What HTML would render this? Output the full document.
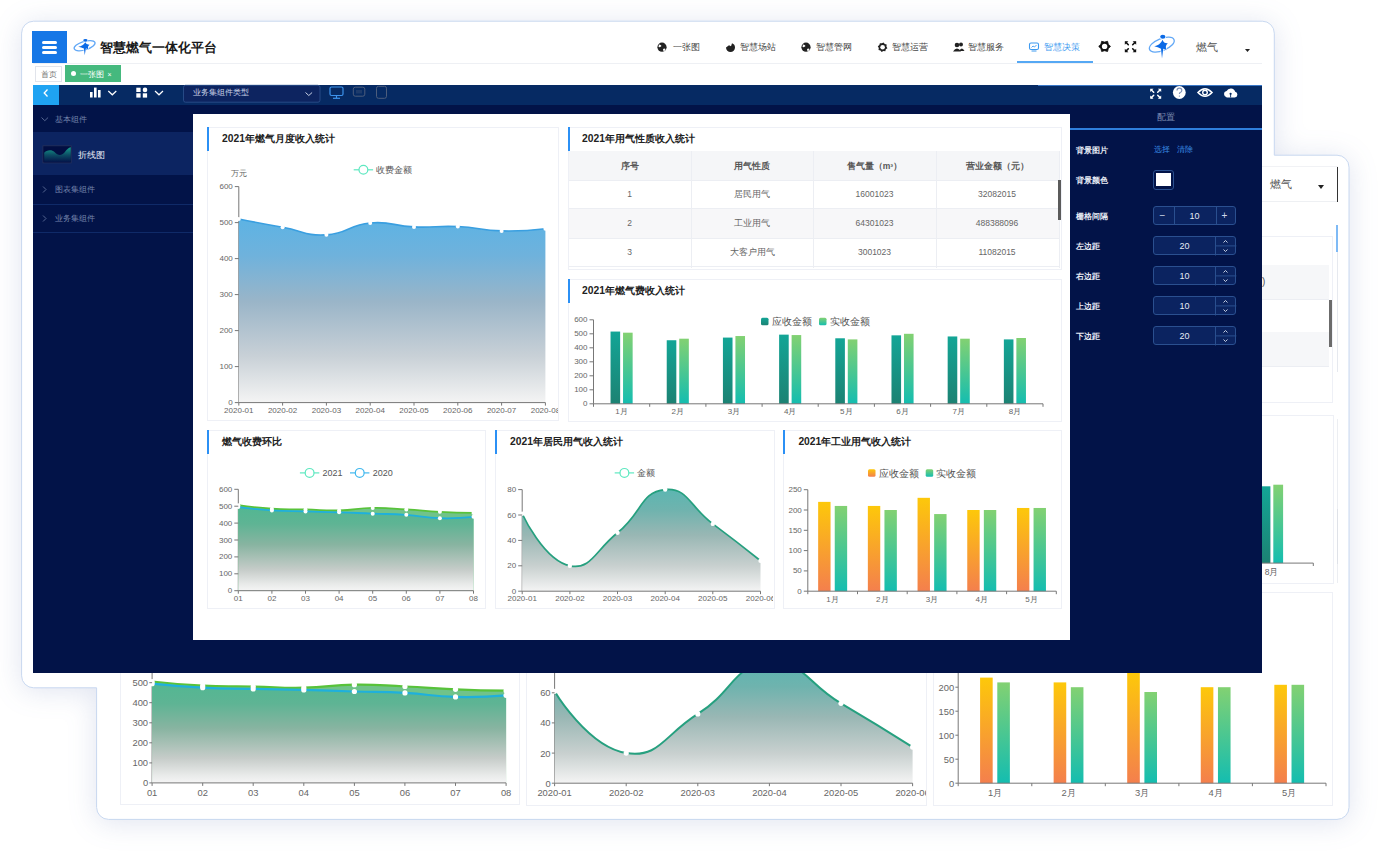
<!DOCTYPE html>
<html><head><meta charset="utf-8">
<style>
*{box-sizing:border-box;margin:0;padding:0}
html,body{width:1384px;height:867px;overflow:hidden;background:#fff;font-family:"Liberation Sans",sans-serif}
.a{position:absolute}
.win{position:absolute;background:#fff;border:1px solid #cddcf2;border-radius:12px;box-shadow:0 2px 34px rgba(50,80,150,0.17)}
svg.ov{position:absolute;left:0;top:0;width:1384px;height:867px;font-family:"Liberation Sans",sans-serif}
.card{position:absolute;border:1px solid #eef0f6;background:#fff}
.acc{position:absolute;width:2px;background:#2b90f5}
.ttl{position:absolute;font-size:10.3px;font-weight:bold;color:#222;line-height:12px;white-space:nowrap}
.nav{position:absolute;font-size:9px;font-weight:500;color:#444;line-height:10px;white-space:nowrap}
.lbl{position:absolute;font-size:8px;color:#e8ecf5;font-weight:bold;line-height:10px;white-space:nowrap}
.inp{position:absolute;border:1px solid #2a4f8f;background:#0b2360;border-radius:3px;color:#dfe6f3;font-size:8px}
.sb{position:absolute;left:33px;width:160px;border-bottom:1px solid #0f2a68}
.sbt{position:absolute;font-size:8px;color:#7483ab;line-height:10px;white-space:nowrap}
.td{position:absolute;font-size:8px;color:#666;line-height:10px;white-space:nowrap;text-align:center}
</style></head><body>

<!-- ============ FRAME ============ -->
<svg class="ov" viewBox="0 0 1384 867" style="filter:drop-shadow(0 3px 14px rgba(60,90,160,0.16))">
<path d="M33.6,21.2 H1262.3 A12,12 0 0 1 1274.3,33.2 V155.2 H1337.0 A12,12 0 0 1 1349.0,167.2 V807.4 A12,12 0 0 1 1337.0,819.4 H108.6 A12,12 0 0 1 96.6,807.4 V687.8 H33.6 A12,12 0 0 1 21.6,675.8 V33.2 A12,12 0 0 1 33.6,21.2 Z" fill="#fff" stroke="#c8d8f0" stroke-width="1"/>
</svg>
<!-- ============ BACK WINDOW ============ -->
<!-- back header -->
<div class="a" style="left:1262px;top:166px;width:76px;height:1px;background:#f1f2f5"></div>
<div class="a" style="left:1262px;top:201px;width:76px;height:1px;background:#eef0f3"></div>
<div class="a" style="left:1270px;top:178px;font-size:11px;color:#555;line-height:12px">燃气</div>
<div class="a" style="left:1318px;top:185px;width:0;height:0;border-left:3px solid transparent;border-right:3px solid transparent;border-top:4px solid #222"></div>
<div class="a" style="left:1336.5px;top:167px;width:1.5px;height:35px;background:#333"></div>
<div class="a" style="left:1336px;top:225px;width:1.5px;height:27px;background:#7fbaf5"></div>
<div class="a" style="left:1337px;top:252px;width:1px;height:120px;background:#e6e9ef"></div>
<!-- back right strip cards -->
<div class="card" style="left:1240px;top:236px;width:93px;height:167px"></div>
<div class="a" style="left:1240px;top:265px;width:89px;height:34px;background:#f6f7f9"></div>
<div class="a" style="left:1240px;top:332px;width:89px;height:34px;background:#f6f7f9"></div>
<div class="a" style="left:1240px;top:299px;width:89px;height:1px;background:#eceef3"></div>
<div class="a" style="left:1240px;top:366px;width:89px;height:1px;background:#eceef3"></div>
<div class="a" style="left:1329px;top:300px;width:3px;height:47px;background:#6b6b6b"></div>
<div class="a" style="left:1262px;top:276px;font-size:10px;color:#555;line-height:11px">)</div>
<div class="card" style="left:1240px;top:415px;width:94px;height:169px"></div>
<div class="a" style="left:1336.5px;top:419px;width:1px;height:164px;background:#eceef2"></div>
<div class="a" style="left:1336.5px;top:509px;width:1px;height:55px;background:#dfe2e8"></div>
<!-- back bottom cards -->
<div class="card" style="left:120px;top:592px;width:400px;height:213px"></div>
<div class="card" style="left:526px;top:592px;width:401px;height:214px"></div>
<div class="card" style="left:933px;top:592px;width:400px;height:214px"></div>
<svg class="ov" viewBox="0 0 1384 867">
<line x1="152.1" y1="662.7" x2="152.1" y2="782.9" stroke="#777" stroke-width="1"/>
<defs><linearGradient id="g13" x1="0" y1="681.5" x2="0" y2="782.9" gradientUnits="userSpaceOnUse"><stop offset="0" stop-color="#70c38a"/><stop offset="1" stop-color="#70c38a"/></linearGradient></defs>
<path d="M152.10,681.50 C152.10,681.50 177.34,684.45 202.67,685.71 C227.91,686.96 227.96,686.01 253.24,686.51 C278.53,687.01 278.54,688.16 303.81,687.71 C329.11,687.26 329.08,685.00 354.38,684.70 C379.65,684.40 379.68,685.36 404.95,686.51 C430.25,687.66 430.22,688.26 455.52,689.31 C480.79,690.36 506.09,690.72 506.09,690.72 L506.09,782.90 L152.10,782.90 Z" fill="url(#g13)"/>
<path d="M152.10,681.50 C152.10,681.50 177.34,684.45 202.67,685.71 C227.91,686.96 227.96,686.01 253.24,686.51 C278.53,687.01 278.54,688.16 303.81,687.71 C329.11,687.26 329.08,685.00 354.38,684.70 C379.65,684.40 379.68,685.36 404.95,686.51 C430.25,687.66 430.22,688.26 455.52,689.31 C480.79,690.36 506.09,690.72 506.09,690.72" fill="none" stroke="#58c23a" stroke-width="2.2"/>
<defs><linearGradient id="g14" x1="0" y1="683.7" x2="0" y2="782.9" gradientUnits="userSpaceOnUse"><stop offset="0" stop-color="#52b792"/><stop offset="0.2" stop-color="#5eb494"/><stop offset="0.45" stop-color="#88b4a1"/><stop offset="0.75" stop-color="#c6ccc9"/><stop offset="0.92" stop-color="#e8eae9"/><stop offset="1" stop-color="#f5f5f5"/></linearGradient></defs>
<path d="M152.10,683.70 C152.10,683.70 177.35,686.41 202.67,687.71 C227.92,689.01 227.95,688.36 253.24,688.91 C278.52,689.46 278.53,689.26 303.81,689.91 C329.10,690.57 329.09,690.77 354.38,691.52 C379.66,692.27 379.70,691.57 404.95,692.92 C430.27,694.27 430.20,696.33 455.52,696.93 C480.77,697.53 506.09,695.33 506.09,695.33 L506.09,782.90 L152.10,782.90 Z" fill="url(#g14)"/>
<path d="M152.10,683.70 C152.10,683.70 177.35,686.41 202.67,687.71 C227.92,689.01 227.95,688.36 253.24,688.91 C278.52,689.46 278.53,689.26 303.81,689.91 C329.10,690.57 329.09,690.77 354.38,691.52 C379.66,692.27 379.70,691.57 404.95,692.92 C430.27,694.27 430.20,696.33 455.52,696.93 C480.77,697.53 506.09,695.33 506.09,695.33" fill="none" stroke="#1fb0dc" stroke-width="2.2"/>
<circle cx="152.10" cy="681.50" r="2.6" fill="#fff"/><circle cx="152.10" cy="683.70" r="2.6" fill="#fff"/>
<circle cx="202.67" cy="685.71" r="2.6" fill="#fff"/><circle cx="202.67" cy="687.71" r="2.6" fill="#fff"/>
<circle cx="253.24" cy="686.51" r="2.6" fill="#fff"/><circle cx="253.24" cy="688.91" r="2.6" fill="#fff"/>
<circle cx="303.81" cy="687.71" r="2.6" fill="#fff"/><circle cx="303.81" cy="689.91" r="2.6" fill="#fff"/>
<circle cx="354.38" cy="684.70" r="2.6" fill="#fff"/><circle cx="354.38" cy="691.52" r="2.6" fill="#fff"/>
<circle cx="404.95" cy="686.51" r="2.6" fill="#fff"/><circle cx="404.95" cy="692.92" r="2.6" fill="#fff"/>
<circle cx="455.52" cy="689.31" r="2.6" fill="#fff"/><circle cx="455.52" cy="696.93" r="2.6" fill="#fff"/>
<circle cx="506.09" cy="690.72" r="2.6" fill="#fff"/><circle cx="506.09" cy="695.33" r="2.6" fill="#fff"/>
<line x1="149.3" y1="782.9" x2="152.1" y2="782.9" stroke="#777" stroke-width="1"/>
<text x="148.1" y="782.9" font-size="9.4" fill="#666" text-anchor="end" dominant-baseline="central">0</text>
<line x1="149.3" y1="762.9" x2="152.1" y2="762.9" stroke="#777" stroke-width="1"/>
<text x="148.1" y="762.9" font-size="9.4" fill="#666" text-anchor="end" dominant-baseline="central">100</text>
<line x1="149.3" y1="742.8" x2="152.1" y2="742.8" stroke="#777" stroke-width="1"/>
<text x="148.1" y="742.8" font-size="9.4" fill="#666" text-anchor="end" dominant-baseline="central">200</text>
<line x1="149.3" y1="722.8" x2="152.1" y2="722.8" stroke="#777" stroke-width="1"/>
<text x="148.1" y="722.8" font-size="9.4" fill="#666" text-anchor="end" dominant-baseline="central">300</text>
<line x1="149.3" y1="702.7" x2="152.1" y2="702.7" stroke="#777" stroke-width="1"/>
<text x="148.1" y="702.7" font-size="9.4" fill="#666" text-anchor="end" dominant-baseline="central">400</text>
<line x1="149.3" y1="682.7" x2="152.1" y2="682.7" stroke="#777" stroke-width="1"/>
<text x="148.1" y="682.7" font-size="9.4" fill="#666" text-anchor="end" dominant-baseline="central">500</text>
<line x1="149.3" y1="662.7" x2="152.1" y2="662.7" stroke="#777" stroke-width="1"/>
<text x="148.1" y="662.7" font-size="9.4" fill="#666" text-anchor="end" dominant-baseline="central">600</text>
<line x1="152.1" y1="782.9" x2="506.0" y2="782.9" stroke="#777" stroke-width="1"/>
<text x="152.1" y="792.6" font-size="9.4" fill="#666" text-anchor="middle" dominant-baseline="central">01</text>
<text x="202.7" y="792.6" font-size="9.4" fill="#666" text-anchor="middle" dominant-baseline="central">02</text>
<text x="253.2" y="792.6" font-size="9.4" fill="#666" text-anchor="middle" dominant-baseline="central">03</text>
<text x="303.8" y="792.6" font-size="9.4" fill="#666" text-anchor="middle" dominant-baseline="central">04</text>
<text x="354.4" y="792.6" font-size="9.4" fill="#666" text-anchor="middle" dominant-baseline="central">05</text>
<text x="404.9" y="792.6" font-size="9.4" fill="#666" text-anchor="middle" dominant-baseline="central">06</text>
<text x="455.5" y="792.6" font-size="9.4" fill="#666" text-anchor="middle" dominant-baseline="central">07</text>
<text x="506.1" y="792.6" font-size="9.4" fill="#666" text-anchor="middle" dominant-baseline="central">08</text>
<line x1="152.1" y1="782.9" x2="152.1" y2="785.9" stroke="#777" stroke-width="1"/>
<line x1="202.7" y1="782.9" x2="202.7" y2="785.9" stroke="#777" stroke-width="1"/>
<line x1="253.2" y1="782.9" x2="253.2" y2="785.9" stroke="#777" stroke-width="1"/>
<line x1="303.8" y1="782.9" x2="303.8" y2="785.9" stroke="#777" stroke-width="1"/>
<line x1="354.4" y1="782.9" x2="354.4" y2="785.9" stroke="#777" stroke-width="1"/>
<line x1="404.9" y1="782.9" x2="404.9" y2="785.9" stroke="#777" stroke-width="1"/>
<line x1="455.5" y1="782.9" x2="455.5" y2="785.9" stroke="#777" stroke-width="1"/>
<line x1="506.1" y1="782.9" x2="506.1" y2="785.9" stroke="#777" stroke-width="1"/>
<line x1="554.6" y1="662.7" x2="554.6" y2="783.2" stroke="#777" stroke-width="1"/>
<defs><linearGradient id="g15" x1="0" y1="662.7" x2="0" y2="783.2" gradientUnits="userSpaceOnUse"><stop offset="0" stop-color="#5cb6b1"/><stop offset="0.2" stop-color="#6fb3ae"/><stop offset="0.45" stop-color="#99b7b4"/><stop offset="0.75" stop-color="#c8d0cf"/><stop offset="1" stop-color="#f4f4f4"/></linearGradient></defs>
<path d="M554.60,691.30 C554.60,691.30 587.77,747.01 626.20,753.07 C659.37,758.30 663.36,735.64 697.80,713.90 C734.96,690.45 732.40,665.40 769.40,662.68 C804.00,660.13 805.53,682.46 841.00,703.36 C877.13,724.64 912.60,747.04 912.60,747.04 L912.60,783.20 L554.60,783.20 Z" fill="url(#g15)"/>
<path d="M554.60,691.30 C554.60,691.30 587.77,747.01 626.20,753.07 C659.37,758.30 663.36,735.64 697.80,713.90 C734.96,690.45 732.40,665.40 769.40,662.68 C804.00,660.13 805.53,682.46 841.00,703.36 C877.13,724.64 912.60,747.04 912.60,747.04" fill="none" stroke="#26a07f" stroke-width="2.0"/>
<circle cx="554.60" cy="691.30" r="2.6" fill="#fff"/>
<circle cx="626.20" cy="753.07" r="2.6" fill="#fff"/>
<circle cx="697.80" cy="713.90" r="2.6" fill="#fff"/>
<circle cx="769.40" cy="662.68" r="2.6" fill="#fff"/>
<circle cx="841.00" cy="703.36" r="2.6" fill="#fff"/>
<circle cx="912.60" cy="747.04" r="2.6" fill="#fff"/>
<line x1="551.8" y1="783.2" x2="554.6" y2="783.2" stroke="#777" stroke-width="1"/>
<text x="550.6" y="783.2" font-size="9.4" fill="#666" text-anchor="end" dominant-baseline="central">0</text>
<line x1="551.8" y1="753.1" x2="554.6" y2="753.1" stroke="#777" stroke-width="1"/>
<text x="550.6" y="753.1" font-size="9.4" fill="#666" text-anchor="end" dominant-baseline="central">20</text>
<line x1="551.8" y1="722.9" x2="554.6" y2="722.9" stroke="#777" stroke-width="1"/>
<text x="550.6" y="722.9" font-size="9.4" fill="#666" text-anchor="end" dominant-baseline="central">40</text>
<line x1="551.8" y1="692.8" x2="554.6" y2="692.8" stroke="#777" stroke-width="1"/>
<text x="550.6" y="692.8" font-size="9.4" fill="#666" text-anchor="end" dominant-baseline="central">60</text>
<line x1="551.8" y1="662.7" x2="554.6" y2="662.7" stroke="#777" stroke-width="1"/>
<text x="550.6" y="662.7" font-size="9.4" fill="#666" text-anchor="end" dominant-baseline="central">80</text>
<line x1="554.6" y1="783.2" x2="912.6" y2="783.2" stroke="#777" stroke-width="1"/>
<clipPath id="c6"><rect x="527" y="592" width="399" height="213"/></clipPath><g clip-path="url(#c6)">
<text x="554.6" y="792.3" font-size="9.4" fill="#666" text-anchor="middle" dominant-baseline="central">2020-01</text>
<text x="626.2" y="792.3" font-size="9.4" fill="#666" text-anchor="middle" dominant-baseline="central">2020-02</text>
<text x="697.8" y="792.3" font-size="9.4" fill="#666" text-anchor="middle" dominant-baseline="central">2020-03</text>
<text x="769.4" y="792.3" font-size="9.4" fill="#666" text-anchor="middle" dominant-baseline="central">2020-04</text>
<text x="841.0" y="792.3" font-size="9.4" fill="#666" text-anchor="middle" dominant-baseline="central">2020-05</text>
<text x="912.6" y="792.3" font-size="9.4" fill="#666" text-anchor="middle" dominant-baseline="central">2020-06</text>
<line x1="554.6" y1="783.2" x2="554.6" y2="786.2" stroke="#777" stroke-width="1"/>
<line x1="626.2" y1="783.2" x2="626.2" y2="786.2" stroke="#777" stroke-width="1"/>
<line x1="697.8" y1="783.2" x2="697.8" y2="786.2" stroke="#777" stroke-width="1"/>
<line x1="769.4" y1="783.2" x2="769.4" y2="786.2" stroke="#777" stroke-width="1"/>
<line x1="841.0" y1="783.2" x2="841.0" y2="786.2" stroke="#777" stroke-width="1"/>
<line x1="912.6" y1="783.2" x2="912.6" y2="786.2" stroke="#777" stroke-width="1"/>
</g>
<line x1="958.2" y1="663.2" x2="958.2" y2="783.2" stroke="#777" stroke-width="1"/>
<defs><linearGradient id="b16" x1="0" y1="0" x2="0" y2="1"><stop offset="0" stop-color="#fdc80a"/><stop offset="1" stop-color="#f47f4d"/></linearGradient></defs>
<defs><linearGradient id="b17" x1="0" y1="0" x2="0" y2="1"><stop offset="0" stop-color="#82d172"/><stop offset="1" stop-color="#14bdb0"/></linearGradient></defs>
<rect x="980.08" y="677.60" width="12.60" height="105.60" fill="url(#b16)"/>
<rect x="997.28" y="682.40" width="12.60" height="100.80" fill="url(#b17)"/>
<rect x="1053.64" y="682.40" width="12.60" height="100.80" fill="url(#b16)"/>
<rect x="1070.84" y="687.20" width="12.60" height="96.00" fill="url(#b17)"/>
<rect x="1127.20" y="672.80" width="12.60" height="110.40" fill="url(#b16)"/>
<rect x="1144.40" y="692.00" width="12.60" height="91.20" fill="url(#b17)"/>
<rect x="1200.76" y="687.20" width="12.60" height="96.00" fill="url(#b16)"/>
<rect x="1217.96" y="687.20" width="12.60" height="96.00" fill="url(#b17)"/>
<rect x="1274.32" y="684.80" width="12.60" height="98.40" fill="url(#b16)"/>
<rect x="1291.52" y="684.80" width="12.60" height="98.40" fill="url(#b17)"/>
<line x1="955.4" y1="783.2" x2="958.2" y2="783.2" stroke="#777" stroke-width="1"/>
<text x="954.2" y="783.2" font-size="9.4" fill="#666" text-anchor="end" dominant-baseline="central">0</text>
<line x1="955.4" y1="759.2" x2="958.2" y2="759.2" stroke="#777" stroke-width="1"/>
<text x="954.2" y="759.2" font-size="9.4" fill="#666" text-anchor="end" dominant-baseline="central">50</text>
<line x1="955.4" y1="735.2" x2="958.2" y2="735.2" stroke="#777" stroke-width="1"/>
<text x="954.2" y="735.2" font-size="9.4" fill="#666" text-anchor="end" dominant-baseline="central">100</text>
<line x1="955.4" y1="711.2" x2="958.2" y2="711.2" stroke="#777" stroke-width="1"/>
<text x="954.2" y="711.2" font-size="9.4" fill="#666" text-anchor="end" dominant-baseline="central">150</text>
<line x1="955.4" y1="687.2" x2="958.2" y2="687.2" stroke="#777" stroke-width="1"/>
<text x="954.2" y="687.2" font-size="9.4" fill="#666" text-anchor="end" dominant-baseline="central">200</text>
<line x1="955.4" y1="663.2" x2="958.2" y2="663.2" stroke="#777" stroke-width="1"/>
<text x="954.2" y="663.2" font-size="9.4" fill="#666" text-anchor="end" dominant-baseline="central">250</text>
<line x1="958.2" y1="783.2" x2="1326.0" y2="783.2" stroke="#777" stroke-width="1"/>
<text x="995.0" y="792.3" font-size="9.4" fill="#666" text-anchor="middle" dominant-baseline="central">1月</text>
<text x="1068.5" y="792.3" font-size="9.4" fill="#666" text-anchor="middle" dominant-baseline="central">2月</text>
<text x="1142.1" y="792.3" font-size="9.4" fill="#666" text-anchor="middle" dominant-baseline="central">3月</text>
<text x="1215.7" y="792.3" font-size="9.4" fill="#666" text-anchor="middle" dominant-baseline="central">4月</text>
<text x="1289.2" y="792.3" font-size="9.4" fill="#666" text-anchor="middle" dominant-baseline="central">5月</text>
<line x1="958.2" y1="783.2" x2="958.2" y2="786.2" stroke="#777" stroke-width="1"/>
<line x1="1031.8" y1="783.2" x2="1031.8" y2="786.2" stroke="#777" stroke-width="1"/>
<line x1="1105.3" y1="783.2" x2="1105.3" y2="786.2" stroke="#777" stroke-width="1"/>
<line x1="1178.9" y1="783.2" x2="1178.9" y2="786.2" stroke="#777" stroke-width="1"/>
<line x1="1252.4" y1="783.2" x2="1252.4" y2="786.2" stroke="#777" stroke-width="1"/>
<line x1="1326.0" y1="783.2" x2="1326.0" y2="786.2" stroke="#777" stroke-width="1"/>
<defs><linearGradient id="rb1" x1="0" y1="0" x2="0" y2="1"><stop offset="0" stop-color="#13a596"/><stop offset="1" stop-color="#1c8273"/></linearGradient><linearGradient id="rb2" x1="0" y1="0" x2="0" y2="1"><stop offset="0" stop-color="#82d172"/><stop offset="1" stop-color="#14bdb0"/></linearGradient></defs>
<rect x="1261.6" y="486.3" width="8.8" height="76.8" fill="url(#rb1)"/>
<rect x="1273.3" y="484.7" width="9.8" height="78.4" fill="url(#rb2)"/>
<line x1="1240" y1="563.1" x2="1313.3" y2="563.1" stroke="#777"/><line x1="1313.3" y1="563.1" x2="1313.3" y2="566" stroke="#777"/>
<text x="1271.5" y="572" font-size="8.5" fill="#666" text-anchor="middle" dominant-baseline="central">8月</text>
</svg>

<!-- ============ FRONT WINDOW ============ -->
<!-- header -->
<div class="a" style="left:32px;top:31px;width:34.5px;height:31.5px;background:#1677e6"></div>
<div class="a" style="left:41.5px;top:41px;width:15.5px;height:2.6px;background:#fff;border-radius:2px"></div>
<div class="a" style="left:41.5px;top:46.4px;width:15.5px;height:2.6px;background:#fff;border-radius:2px"></div>
<div class="a" style="left:41.5px;top:51.3px;width:15.5px;height:2.6px;background:#fff;border-radius:2px"></div>
<div class="a" style="left:33px;top:63px;width:1229px;height:1px;background:#eef0f4"></div>
<!-- logo -->
<svg class="ov" viewBox="0 0 1384 867">
<defs>
<g id="logo">
 <ellipse cx="13.8" cy="10.6" rx="13.2" ry="6.0" transform="rotate(-22 13.8 10.6)" fill="none" stroke="#62a8f6" stroke-width="1.3" vector-effect="non-scaling-stroke"/>
 <path d="M14.6,5.8 Q15.6,9.6 19.8,9.3 Q16.6,12 18.6,16.2 Q15.6,14 15.2,15 L14,24.5 L13,14.8 Q10,13 6.2,12.3 Q12,11.5 14.6,5.8 Z" fill="#0b6ae6" stroke="#fff" stroke-width="1.2" paint-order="stroke"/>
 <ellipse cx="14.8" cy="2.8" rx="2.6" ry="2" fill="#0b6ae6" stroke="#fff" stroke-width="1.2" paint-order="stroke"/>
</g>
</defs>
<use href="#logo" transform="translate(73,38.35) scale(0.84,0.69)"/>
<use href="#logo" transform="translate(1148,34)"/>
</svg>
<div class="a" style="left:100px;top:40.5px;font-size:12.8px;font-weight:bold;color:#1a1a1a;line-height:14px;white-space:nowrap">智慧燃气一体化平台</div>
<!-- nav -->
<div class="nav" style="left:672.8px;top:42px">一张图</div>
<div class="nav" style="left:739.6px;top:42px">智慧场站</div>
<div class="nav" style="left:815.8px;top:42px">智慧管网</div>
<div class="nav" style="left:892px;top:42px">智慧运营</div>
<div class="nav" style="left:968.2px;top:42px">智慧服务</div>
<div class="nav" style="left:1044.4px;top:42px;color:#3d9af0">智慧决策</div>
<div class="a" style="left:1017px;top:61px;width:76px;height:2px;background:#55a8f4"></div>
<svg class="ov" viewBox="0 0 1384 867">
 <!-- globe icons -->
 <g fill="#222">
  <circle cx="662" cy="47.2" r="4.6"/>
  <circle cx="806" cy="47.2" r="4.6"/>
 </g>
 <g fill="#fff"><path d="M659,44.5 q2,0 2.5,1.5 q-1,1.5 -3,1 z M663,49 q1.5,-1 2.5,0 q-0.5,2 -2,2.5 z"/><path d="M803,44.5 q2,0 2.5,1.5 q-1,1.5 -3,1 z M807,49 q1.5,-1 2.5,0 q-0.5,2 -2,2.5 z"/></g>
 <!-- 场站 icon -->
 <path d="M726,47.5 a4.5,4.5 0 1 0 9,0 a4.5,4.5 0 0 0 -3,-4.2 l-1,3 l-2,-1 z" fill="#222"/>
 <!-- gear small -->
 <path d="M887.41,48.16 L885.84,49.37 L885.32,51.27 L883.36,51.03 L881.64,52.01 L880.43,50.44 L878.53,49.92 L878.77,47.96 L877.79,46.24 L879.36,45.03 L879.88,43.13 L881.84,43.37 L883.56,42.39 L884.77,43.96 L886.67,44.48 L886.43,46.44 Z" fill="#222"/><circle cx="882.6" cy="47.2" r="2.3" fill="#fff"/>
 <!-- users -->
 <g fill="#222"><circle cx="957" cy="45" r="2.3"/><path d="M953,51.5 q4,-6 8,0 z"/><circle cx="961" cy="44.5" r="2"/><path d="M959,51 q3,-5 5.5,0 z"/></g>
 <!-- decision icon -->
 <rect x="1029.5" y="43" width="9" height="6.5" rx="1.5" fill="none" stroke="#3d9af0" stroke-width="1.1"/>
 <path d="M1031.5,47.5 l1.5,-1.5 l1.5,1 l2,-2" fill="none" stroke="#3d9af0" stroke-width="0.9"/>
 <line x1="1031.5" y1="51" x2="1036.5" y2="51" stroke="#3d9af0" stroke-width="1"/>
 <!-- gear big -->
 <path d="M1110.50,46.40 L1108.32,48.55 L1107.55,51.51 L1104.60,50.70 L1101.65,51.51 L1100.88,48.55 L1098.70,46.40 L1100.88,44.25 L1101.65,41.29 L1104.60,42.10 L1107.55,41.29 L1108.32,44.25 Z" fill="#111" stroke="#111" stroke-width="0.8" stroke-linejoin="round"/>
 <circle cx="1104.6" cy="46.4" r="2.7" fill="#fff"/>
<!-- expand -->
<path d="M1124.80,41.20 h3.60 L1124.80,44.80 Z" fill="#111"/>
<line x1="1126.00" y1="42.40" x2="1128.30" y2="44.70" stroke="#111" stroke-width="1.6" stroke-linecap="round"/>
<path d="M1136.20,41.20 h-3.60 L1136.20,44.80 Z" fill="#111"/>
<line x1="1135.00" y1="42.40" x2="1132.70" y2="44.70" stroke="#111" stroke-width="1.6" stroke-linecap="round"/>
<path d="M1124.80,52.30 h3.60 L1124.80,48.70 Z" fill="#111"/>
<line x1="1126.00" y1="51.10" x2="1128.30" y2="48.80" stroke="#111" stroke-width="1.6" stroke-linecap="round"/>
<path d="M1136.20,52.30 h-3.60 L1136.20,48.70 Z" fill="#111"/>
<line x1="1135.00" y1="51.10" x2="1132.70" y2="48.80" stroke="#111" stroke-width="1.6" stroke-linecap="round"/>
 
 <path d="M1245,49 h5 l-2.5,3 z" fill="#222"/>
</svg>
<div class="a" style="left:1196px;top:41px;font-size:10.5px;color:#555;line-height:12px">燃气</div>

<!-- tabs -->
<div class="a" style="left:35px;top:65.5px;width:27px;height:16px;border:1px solid #e1e4eb;background:#fff;font-size:7.5px;color:#777;line-height:15px;text-align:center">首页</div>
<div class="a" style="left:65.3px;top:65.4px;width:55.7px;height:16.3px;background:#45b97e"></div>
<div class="a" style="left:71.2px;top:71.3px;width:5.2px;height:5.2px;border-radius:50%;background:#fff"></div>
<div class="a" style="left:79.5px;top:70px;font-size:8px;color:#fff;line-height:10px;white-space:nowrap">一张图</div>
<div class="a" style="left:107.5px;top:70px;font-size:7px;color:#fff;line-height:10px">×</div>

<!-- dark editor area -->
<div class="a" style="left:33px;top:85px;width:1229.2px;height:20px;background:#062a63"></div>
<div class="a" style="left:1038px;top:84.5px;width:224.2px;height:1px;background:#3a78c8"></div>
<div class="a" style="left:33px;top:105px;width:1229.2px;height:568px;background:#021348"></div>
<div class="a" style="left:33px;top:85px;width:25.6px;height:20px;background:#1fa3f2"></div>
<svg class="ov" viewBox="0 0 1384 867">
 <path d="M47.5,89.5 l-3.3,3.5 l3.3,3.5" fill="none" stroke="#fff" stroke-width="1.3"/>
 <!-- bars icon -->
 <g fill="#fff"><rect x="90" y="92" width="2.6" height="5.5"/><rect x="94" y="87.6" width="2.6" height="9.9"/><rect x="98" y="90" width="2.6" height="7.5"/></g>
 <path d="M108.3,91 l4,3.8 l4,-3.8" fill="none" stroke="#fff" stroke-width="1.2"/>
 <!-- grid icon -->
 <g fill="#fff"><rect x="136.3" y="87.7" width="4.3" height="4.3"/><circle cx="145" cy="89.9" r="2.3"/><rect x="136.3" y="93.3" width="4.3" height="4.3"/><rect x="142.8" y="93.3" width="4.3" height="4.3"/></g>
 <path d="M155,91 l4,3.8 l4,-3.8" fill="none" stroke="#fff" stroke-width="1.2"/>
 <!-- select -->
 <rect x="183.5" y="85.3" width="136.5" height="16.9" rx="2" fill="#0d2460" stroke="#2a4e8a" stroke-width="0.9"/>
 <text x="193" y="92.3" font-size="8.4px" fill="#c9d2e6" dominant-baseline="central">业务集组件类型</text>
 <path d="M305.5,92.5 l3.3,3 l3.3,-3" fill="none" stroke="#c9d2e6" stroke-width="1"/>
 <!-- device icons -->
 <rect x="330" y="87" width="13" height="8.5" rx="1.5" fill="none" stroke="#3d93ec" stroke-width="1.2"/>
 <line x1="336.5" y1="95.5" x2="336.5" y2="98" stroke="#3d93ec" stroke-width="1.2"/><line x1="333" y1="98.3" x2="340" y2="98.3" stroke="#3d93ec" stroke-width="1.2"/>
 <rect x="353.3" y="87.2" width="11.5" height="9" rx="2" fill="none" stroke="#4d5d7c" stroke-width="1"/>
 <path d="M357,90 v3.5 M359,90 v3.5 M361,90 v3.5" stroke="#4d5d7c" stroke-width="0.7"/>
 <rect x="376.5" y="86.3" width="10" height="12" rx="2" fill="none" stroke="#4d5d7c" stroke-width="1"/>
 <!-- right toolbar icons -->
 <path d="M1150.20,88.80 h3.30 L1150.20,92.10 Z" fill="#fff"/>
<line x1="1151.40" y1="90.00" x2="1153.70" y2="92.30" stroke="#fff" stroke-width="1.5" stroke-linecap="round"/>
<path d="M1161.20,88.80 h-3.30 L1161.20,92.10 Z" fill="#fff"/>
<line x1="1160.00" y1="90.00" x2="1157.70" y2="92.30" stroke="#fff" stroke-width="1.5" stroke-linecap="round"/>
<path d="M1150.20,98.80 h3.30 L1150.20,95.50 Z" fill="#fff"/>
<line x1="1151.40" y1="97.60" x2="1153.70" y2="95.30" stroke="#fff" stroke-width="1.5" stroke-linecap="round"/>
<path d="M1161.20,98.80 h-3.30 L1161.20,95.50 Z" fill="#fff"/>
<line x1="1160.00" y1="97.60" x2="1157.70" y2="95.30" stroke="#fff" stroke-width="1.5" stroke-linecap="round"/>
 <circle cx="1179.3" cy="92.5" r="6.4" fill="#fff"/>
 <path d="M1177,90.6 q0,-2.4 2.4,-2.4 q2.4,0 2.4,2.2 q0,1.4 -1.6,2.1 q-0.8,0.4 -0.8,1.6" fill="none" stroke="#8193b8" stroke-width="1.2"/>
 <circle cx="1179.4" cy="96.1" r="0.7" fill="#8193b8"/>
 <path d="M1198,92.5 q7,-7.6 14,0 q-7,7.6 -14,0 z" fill="none" stroke="#fff" stroke-width="1.6"/>
 <circle cx="1205" cy="92.5" r="2.3" fill="none" stroke="#fff" stroke-width="1.4"/>
 <path d="M1226.8,97.4 a3.2,3.2 0 0 1 -0.2,-6.3 a4.6,4.6 0 0 1 8.6,0.6 a2.9,2.9 0 0 1 -0.4,5.7 z" fill="#fff"/>
 <circle cx="1230.6" cy="93.8" r="1.1" fill="#062a63"/>
 <path d="M1230.6,94 v3.4" stroke="#062a63" stroke-width="0.9"/>
</svg>

<!-- sidebar -->
<div class="sb" style="top:105px;height:27.5px"></div>
<div class="a" style="left:33px;top:132.3px;width:160px;height:43px;background:#0c2461"></div>
<div class="sb" style="top:175px;height:29.5px"></div>
<div class="sb" style="top:204.5px;height:28.5px"></div>
<svg class="ov" viewBox="0 0 1384 867">
 <path d="M41.5,117.5 l3.3,3.2 l3.3,-3.2" fill="none" stroke="#5f6f9a" stroke-width="0.9"/>
 <path d="M43,186.5 l3,3 l-3,3" fill="none" stroke="#5f6f9a" stroke-width="0.9"/>
 <path d="M43,215.5 l3,3 l-3,3" fill="none" stroke="#5f6f9a" stroke-width="0.9"/>
 <defs><linearGradient id="thg" x1="0" y1="147" x2="0" y2="162" gradientUnits="userSpaceOnUse"><stop offset="0" stop-color="#15a08c"/><stop offset="0.55" stop-color="#0c4a63"/><stop offset="1" stop-color="#04154a"/></linearGradient></defs>
 <rect x="42.9" y="145.8" width="28.3" height="17.1" fill="#020e42" stroke="#27335c" stroke-width="0.8"/>
 <path d="M44.2,152.8 C46,150.2 51.5,148.8 54.5,152 C57.5,155.6 61.5,156.2 64.5,152.6 C66.5,149.8 68.5,147.6 70.8,147.3 L70.8,162.3 L44.2,162.3 Z" fill="url(#thg)"/>
</svg>
<div class="sbt" style="left:55px;top:115px">基本组件</div>
<div class="a" style="left:77.7px;top:150px;font-size:9px;color:#e8ecf5;line-height:10px;white-space:nowrap">折线图</div>
<div class="sbt" style="left:55px;top:185px">图表集组件</div>
<div class="sbt" style="left:55px;top:214px">业务集组件</div>

<!-- right panel -->
<div class="a" style="left:1070px;top:128px;width:192.2px;height:1.6px;background:#2f7fdc"></div>
<div class="a" style="left:1157px;top:112px;font-size:8.5px;color:#7b8bb0;line-height:10px">配置</div>
<div class="lbl" style="left:1076px;top:146px">背景图片</div>
<div class="a" style="left:1154px;top:145px;font-size:8px;color:#3a8ee6;line-height:10px">选择</div>
<div class="a" style="left:1177px;top:145px;font-size:8px;color:#3a8ee6;line-height:10px">清除</div>
<div class="lbl" style="left:1076px;top:176px">背景颜色</div>
<div class="a" style="left:1153px;top:170px;width:20.7px;height:19.5px;border:1px solid #2a4f8f;border-radius:3px"></div>
<div class="a" style="left:1156px;top:173px;width:14.5px;height:13px;background:#fff"></div>
<div class="lbl" style="left:1076px;top:212px">栅格间隔</div>
<div class="inp" style="left:1153px;top:206.3px;width:83.4px;height:19.2px"></div>
<div class="a" style="left:1173.5px;top:206.3px;width:1px;height:19.2px;background:#2a4f8f"></div>
<div class="a" style="left:1215.8px;top:206.3px;width:1px;height:19.2px;background:#2a4f8f"></div>
<div class="a" style="left:1159.5px;top:210px;font-size:10px;color:#cfd8ea;line-height:12px">−</div>
<div class="a" style="left:1221.5px;top:209.5px;font-size:10px;color:#cfd8ea;line-height:12px">+</div>
<div class="a" style="left:1189.5px;top:211px;font-size:9px;color:#e6ebf5;line-height:11px">10</div>
<div class="lbl" style="left:1076px;top:242px">左边距</div>
<div class="lbl" style="left:1076px;top:272px">右边距</div>
<div class="lbl" style="left:1076px;top:301.5px">上边距</div>
<div class="lbl" style="left:1076px;top:331.5px">下边距</div>
<div class="inp" style="left:1153px;top:236.3px;width:83.4px;height:19.2px"></div>
<div class="inp" style="left:1153px;top:266.3px;width:83.4px;height:19.2px"></div>
<div class="inp" style="left:1153px;top:296.3px;width:83.4px;height:19.2px"></div>
<div class="inp" style="left:1153px;top:326.3px;width:83.4px;height:19.2px"></div>
<svg class="ov" viewBox="0 0 1384 867">
 <g stroke="#2a4f8f" stroke-width="1">
  <line x1="1215.5" y1="236.3" x2="1215.5" y2="255.5"/><line x1="1215.5" y1="245.9" x2="1236.4" y2="245.9"/>
  <line x1="1215.5" y1="266.3" x2="1215.5" y2="285.5"/><line x1="1215.5" y1="275.9" x2="1236.4" y2="275.9"/>
  <line x1="1215.5" y1="296.3" x2="1215.5" y2="315.5"/><line x1="1215.5" y1="305.9" x2="1236.4" y2="305.9"/>
  <line x1="1215.5" y1="326.3" x2="1215.5" y2="345.5"/><line x1="1215.5" y1="335.9" x2="1236.4" y2="335.9"/>
 </g>
 <g stroke="#c5cee2" stroke-width="1" fill="none">
  <path d="M1223.5,242.5 l2,-2 l2,2 M1223.5,249.5 l2,2 l2,-2"/>
  <path d="M1223.5,272.5 l2,-2 l2,2 M1223.5,279.5 l2,2 l2,-2"/>
  <path d="M1223.5,302.5 l2,-2 l2,2 M1223.5,309.5 l2,2 l2,-2"/>
  <path d="M1223.5,332.5 l2,-2 l2,2 M1223.5,339.5 l2,2 l2,-2"/>
 </g>
 <g font-size="9" fill="#e6ebf5" text-anchor="middle" dominant-baseline="central">
  <text x="1184.5" y="246">20</text><text x="1184.5" y="276">10</text><text x="1184.5" y="306">10</text><text x="1184.5" y="336">20</text>
 </g>
</svg>

<!-- canvas -->
<div class="a" style="left:193px;top:113.8px;width:877px;height:526.5px;background:#fff"></div>
<div class="card" style="left:206.7px;top:126.7px;width:352px;height:294.5px"></div>
<div class="card" style="left:567.9px;top:126.6px;width:494px;height:143px"></div>
<div class="card" style="left:567.9px;top:278.7px;width:494px;height:143.5px"></div>
<div class="card" style="left:206.7px;top:429.5px;width:279.5px;height:179px"></div>
<div class="card" style="left:494.5px;top:429.5px;width:280px;height:179px"></div>
<div class="card" style="left:782.8px;top:429.5px;width:279px;height:179px"></div>
<div class="acc" style="left:207px;top:127px;height:24px"></div>
<div class="acc" style="left:568px;top:127px;height:24px"></div>
<div class="acc" style="left:568px;top:279px;height:24px"></div>
<div class="acc" style="left:207px;top:430px;height:24px"></div>
<div class="acc" style="left:495px;top:430px;height:24px"></div>
<div class="acc" style="left:783px;top:430px;height:24px"></div>
<div class="ttl" style="left:222px;top:132.5px">2021年燃气月度收入统计</div>
<div class="ttl" style="left:582px;top:132.5px">2021年用气性质收入统计</div>
<div class="ttl" style="left:582px;top:284.5px">2021年燃气费收入统计</div>
<div class="ttl" style="left:222px;top:436px">燃气收费环比</div>
<div class="ttl" style="left:510px;top:436px">2021年居民用气收入统计</div>
<div class="ttl" style="left:798.4px;top:436px">2021年工业用气收入统计</div>
<!-- table -->
<div class="a" style="left:568.5px;top:151px;width:490px;height:29px;background:#f5f6f8"></div>
<div class="a" style="left:568.5px;top:208px;width:490px;height:30px;background:#f7f7f9"></div>
<div class="a" style="left:568.5px;top:180px;width:490px;height:1px;background:#eceef3"></div>
<div class="a" style="left:568.5px;top:208px;width:490px;height:1px;background:#eceef3"></div>
<div class="a" style="left:568.5px;top:238px;width:490px;height:1px;background:#eceef3"></div>
<div class="a" style="left:568.5px;top:266px;width:490px;height:1px;background:#eceef3"></div>
<div class="a" style="left:691px;top:151px;width:1px;height:117px;background:#eceef3"></div>
<div class="a" style="left:813.4px;top:151px;width:1px;height:117px;background:#eceef3"></div>
<div class="a" style="left:935.9px;top:151px;width:1px;height:117px;background:#eceef3"></div>
<div class="a" style="left:1058.7px;top:151px;width:1px;height:117px;background:#eceef3"></div>
<div class="a" style="left:1058.3px;top:180px;width:3px;height:40px;background:#5b5b5b"></div>
<svg class="ov" viewBox="0 0 1384 867">
 <g font-size="8.5" fill="#555" font-weight="bold" text-anchor="middle" dominant-baseline="central">
  <text x="629.5" y="165.5">序号</text><text x="752" y="165.5">用气性质</text><text x="874.5" y="165.5">售气量（m³）</text><text x="997" y="165.5">营业金额（元）</text>
 </g>
 <g font-size="8.5" fill="#666" text-anchor="middle" dominant-baseline="central">
  <text x="629.5" y="194">1</text><text x="752" y="194">居民用气</text><text x="874.5" y="194">16001023</text><text x="997" y="194">32082015</text>
  <text x="629.5" y="223">2</text><text x="752" y="223">工业用气</text><text x="874.5" y="223">64301023</text><text x="997" y="223">488388096</text>
  <text x="629.5" y="251.5">3</text><text x="752" y="251.5">大客户用气</text><text x="874.5" y="251.5">3001023</text><text x="997" y="251.5">11082015</text>
 </g>
<line x1="238.8" y1="186.6" x2="238.8" y2="402.6" stroke="#777" stroke-width="1"/>
<defs><linearGradient id="g1" x1="0" y1="219.0" x2="0" y2="402.6" gradientUnits="userSpaceOnUse"><stop offset="0" stop-color="#5db3e4"/><stop offset="0.2" stop-color="#6fb2dc"/><stop offset="0.45" stop-color="#9ab5c8"/><stop offset="0.75" stop-color="#c9d1d7"/><stop offset="1" stop-color="#f4f4f4"/></linearGradient></defs>
<path d="M238.80,219.00 C238.80,219.00 260.67,223.31 282.60,227.28 C304.47,231.23 304.73,235.91 326.40,234.84 C348.53,233.75 347.96,224.97 370.20,222.96 C391.76,221.01 392.06,226.02 414.00,226.92 C435.86,227.82 435.95,225.57 457.80,226.56 C479.75,227.55 479.66,230.34 501.60,230.88 C523.46,231.42 545.40,228.72 545.40,228.72 L545.40,402.60 L238.80,402.60 Z" fill="url(#g1)"/>
<path d="M238.80,219.00 C238.80,219.00 260.67,223.31 282.60,227.28 C304.47,231.23 304.73,235.91 326.40,234.84 C348.53,233.75 347.96,224.97 370.20,222.96 C391.76,221.01 392.06,226.02 414.00,226.92 C435.86,227.82 435.95,225.57 457.80,226.56 C479.75,227.55 479.66,230.34 501.60,230.88 C523.46,231.42 545.40,228.72 545.40,228.72" fill="none" stroke="#3a9fe0" stroke-width="1.6"/>
<circle cx="238.80" cy="219.00" r="2" fill="#fff"/>
<circle cx="282.60" cy="227.28" r="2" fill="#fff"/>
<circle cx="326.40" cy="234.84" r="2" fill="#fff"/>
<circle cx="370.20" cy="222.96" r="2" fill="#fff"/>
<circle cx="414.00" cy="226.92" r="2" fill="#fff"/>
<circle cx="457.80" cy="226.56" r="2" fill="#fff"/>
<circle cx="501.60" cy="230.88" r="2" fill="#fff"/>
<circle cx="545.40" cy="228.72" r="2" fill="#fff"/>
<line x1="234.8" y1="402.6" x2="238.8" y2="402.6" stroke="#777" stroke-width="1"/>
<text x="232.8" y="402.6" font-size="8" fill="#666" text-anchor="end" dominant-baseline="central">0</text>
<line x1="234.8" y1="366.6" x2="238.8" y2="366.6" stroke="#777" stroke-width="1"/>
<text x="232.8" y="366.6" font-size="8" fill="#666" text-anchor="end" dominant-baseline="central">100</text>
<line x1="234.8" y1="330.6" x2="238.8" y2="330.6" stroke="#777" stroke-width="1"/>
<text x="232.8" y="330.6" font-size="8" fill="#666" text-anchor="end" dominant-baseline="central">200</text>
<line x1="234.8" y1="294.6" x2="238.8" y2="294.6" stroke="#777" stroke-width="1"/>
<text x="232.8" y="294.6" font-size="8" fill="#666" text-anchor="end" dominant-baseline="central">300</text>
<line x1="234.8" y1="258.6" x2="238.8" y2="258.6" stroke="#777" stroke-width="1"/>
<text x="232.8" y="258.6" font-size="8" fill="#666" text-anchor="end" dominant-baseline="central">400</text>
<line x1="234.8" y1="222.6" x2="238.8" y2="222.6" stroke="#777" stroke-width="1"/>
<text x="232.8" y="222.6" font-size="8" fill="#666" text-anchor="end" dominant-baseline="central">500</text>
<line x1="234.8" y1="186.6" x2="238.8" y2="186.6" stroke="#777" stroke-width="1"/>
<text x="232.8" y="186.6" font-size="8" fill="#666" text-anchor="end" dominant-baseline="central">600</text>
<line x1="238.8" y1="402.6" x2="545.4" y2="402.6" stroke="#777" stroke-width="1"/>
<clipPath id="c1"><rect x="200" y="120" width="358" height="300"/></clipPath><g clip-path="url(#c1)">
<text x="238.8" y="410.3" font-size="8" fill="#666" text-anchor="middle" dominant-baseline="central">2020-01</text>
<text x="282.6" y="410.3" font-size="8" fill="#666" text-anchor="middle" dominant-baseline="central">2020-02</text>
<text x="326.4" y="410.3" font-size="8" fill="#666" text-anchor="middle" dominant-baseline="central">2020-03</text>
<text x="370.2" y="410.3" font-size="8" fill="#666" text-anchor="middle" dominant-baseline="central">2020-04</text>
<text x="414.0" y="410.3" font-size="8" fill="#666" text-anchor="middle" dominant-baseline="central">2020-05</text>
<text x="457.8" y="410.3" font-size="8" fill="#666" text-anchor="middle" dominant-baseline="central">2020-06</text>
<text x="501.6" y="410.3" font-size="8" fill="#666" text-anchor="middle" dominant-baseline="central">2020-07</text>
<text x="545.4" y="410.3" font-size="8" fill="#666" text-anchor="middle" dominant-baseline="central">2020-08</text>
<line x1="238.8" y1="402.6" x2="238.8" y2="405.6" stroke="#777" stroke-width="1"/>
<line x1="282.6" y1="402.6" x2="282.6" y2="405.6" stroke="#777" stroke-width="1"/>
<line x1="326.4" y1="402.6" x2="326.4" y2="405.6" stroke="#777" stroke-width="1"/>
<line x1="370.2" y1="402.6" x2="370.2" y2="405.6" stroke="#777" stroke-width="1"/>
<line x1="414.0" y1="402.6" x2="414.0" y2="405.6" stroke="#777" stroke-width="1"/>
<line x1="457.8" y1="402.6" x2="457.8" y2="405.6" stroke="#777" stroke-width="1"/>
<line x1="501.6" y1="402.6" x2="501.6" y2="405.6" stroke="#777" stroke-width="1"/>
<line x1="545.4" y1="402.6" x2="545.4" y2="405.6" stroke="#777" stroke-width="1"/>
</g>
<text x="238.5" y="173" font-size="7.5" fill="#666" text-anchor="middle" dominant-baseline="central">万元</text>
<line x1="353.7" y1="169.8" x2="373.1" y2="169.8" stroke="#5ee8c0" stroke-width="1.2"/><circle cx="363.4" cy="169.8" r="4.4" fill="#fff" stroke="#5ee8c0" stroke-width="1.2"/><text x="376.4" y="169.8" font-size="8.5" fill="#555" dominant-baseline="central">收费金额</text>
<line x1="238.3" y1="489.3" x2="238.3" y2="590.7" stroke="#777" stroke-width="1"/>
<defs><linearGradient id="g2" x1="0" y1="505.2" x2="0" y2="590.7" gradientUnits="userSpaceOnUse"><stop offset="0" stop-color="#70c38a"/><stop offset="1" stop-color="#70c38a"/></linearGradient></defs>
<path d="M238.30,505.19 C238.30,505.19 255.06,507.68 271.90,508.74 C288.66,509.79 288.70,508.99 305.50,509.41 C322.30,509.83 322.32,510.80 339.10,510.43 C355.92,510.04 355.88,508.14 372.70,507.89 C389.48,507.64 389.51,508.44 406.30,509.41 C423.11,510.38 423.08,510.89 439.90,511.78 C456.68,512.66 473.50,512.96 473.50,512.96 L473.50,590.70 L238.30,590.70 Z" fill="url(#g2)"/>
<path d="M238.30,505.19 C238.30,505.19 255.06,507.68 271.90,508.74 C288.66,509.79 288.70,508.99 305.50,509.41 C322.30,509.83 322.32,510.80 339.10,510.43 C355.92,510.04 355.88,508.14 372.70,507.89 C389.48,507.64 389.51,508.44 406.30,509.41 C423.11,510.38 423.08,510.89 439.90,511.78 C456.68,512.66 473.50,512.96 473.50,512.96" fill="none" stroke="#58c23a" stroke-width="1.8"/>
<defs><linearGradient id="g3" x1="0" y1="507.0" x2="0" y2="590.7" gradientUnits="userSpaceOnUse"><stop offset="0" stop-color="#52b792"/><stop offset="0.2" stop-color="#5eb494"/><stop offset="0.45" stop-color="#88b4a1"/><stop offset="0.75" stop-color="#c6ccc9"/><stop offset="0.92" stop-color="#e8eae9"/><stop offset="1" stop-color="#f5f5f5"/></linearGradient></defs>
<path d="M238.30,507.05 C238.30,507.05 255.06,509.32 271.90,510.43 C288.66,511.52 288.70,510.97 305.50,511.44 C322.30,511.90 322.30,511.73 339.10,512.28 C355.90,512.83 355.90,513.00 372.70,513.64 C389.50,514.27 389.54,513.68 406.30,514.82 C423.14,515.96 423.06,517.69 439.90,518.20 C456.66,518.70 473.50,516.85 473.50,516.85 L473.50,590.70 L238.30,590.70 Z" fill="url(#g3)"/>
<path d="M238.30,507.05 C238.30,507.05 255.06,509.32 271.90,510.43 C288.66,511.52 288.70,510.97 305.50,511.44 C322.30,511.90 322.30,511.73 339.10,512.28 C355.90,512.83 355.90,513.00 372.70,513.64 C389.50,514.27 389.54,513.68 406.30,514.82 C423.14,515.96 423.06,517.69 439.90,518.20 C456.66,518.70 473.50,516.85 473.50,516.85" fill="none" stroke="#1fb0dc" stroke-width="1.8"/>
<circle cx="238.30" cy="505.19" r="2" fill="#fff"/><circle cx="238.30" cy="507.05" r="2" fill="#fff"/>
<circle cx="271.90" cy="508.74" r="2" fill="#fff"/><circle cx="271.90" cy="510.43" r="2" fill="#fff"/>
<circle cx="305.50" cy="509.41" r="2" fill="#fff"/><circle cx="305.50" cy="511.44" r="2" fill="#fff"/>
<circle cx="339.10" cy="510.43" r="2" fill="#fff"/><circle cx="339.10" cy="512.28" r="2" fill="#fff"/>
<circle cx="372.70" cy="507.89" r="2" fill="#fff"/><circle cx="372.70" cy="513.64" r="2" fill="#fff"/>
<circle cx="406.30" cy="509.41" r="2" fill="#fff"/><circle cx="406.30" cy="514.82" r="2" fill="#fff"/>
<circle cx="439.90" cy="511.78" r="2" fill="#fff"/><circle cx="439.90" cy="518.20" r="2" fill="#fff"/>
<circle cx="473.50" cy="512.96" r="2" fill="#fff"/><circle cx="473.50" cy="516.85" r="2" fill="#fff"/>
<line x1="234.3" y1="590.7" x2="238.3" y2="590.7" stroke="#777" stroke-width="1"/>
<text x="232.3" y="590.7" font-size="8" fill="#666" text-anchor="end" dominant-baseline="central">0</text>
<line x1="234.3" y1="573.8" x2="238.3" y2="573.8" stroke="#777" stroke-width="1"/>
<text x="232.3" y="573.8" font-size="8" fill="#666" text-anchor="end" dominant-baseline="central">100</text>
<line x1="234.3" y1="556.9" x2="238.3" y2="556.9" stroke="#777" stroke-width="1"/>
<text x="232.3" y="556.9" font-size="8" fill="#666" text-anchor="end" dominant-baseline="central">200</text>
<line x1="234.3" y1="540.0" x2="238.3" y2="540.0" stroke="#777" stroke-width="1"/>
<text x="232.3" y="540.0" font-size="8" fill="#666" text-anchor="end" dominant-baseline="central">300</text>
<line x1="234.3" y1="523.1" x2="238.3" y2="523.1" stroke="#777" stroke-width="1"/>
<text x="232.3" y="523.1" font-size="8" fill="#666" text-anchor="end" dominant-baseline="central">400</text>
<line x1="234.3" y1="506.2" x2="238.3" y2="506.2" stroke="#777" stroke-width="1"/>
<text x="232.3" y="506.2" font-size="8" fill="#666" text-anchor="end" dominant-baseline="central">500</text>
<line x1="234.3" y1="489.3" x2="238.3" y2="489.3" stroke="#777" stroke-width="1"/>
<text x="232.3" y="489.3" font-size="8" fill="#666" text-anchor="end" dominant-baseline="central">600</text>
<line x1="238.3" y1="590.7" x2="473.5" y2="590.7" stroke="#777" stroke-width="1"/>
<text x="238.3" y="598.8" font-size="8" fill="#666" text-anchor="middle" dominant-baseline="central">01</text>
<text x="271.9" y="598.8" font-size="8" fill="#666" text-anchor="middle" dominant-baseline="central">02</text>
<text x="305.5" y="598.8" font-size="8" fill="#666" text-anchor="middle" dominant-baseline="central">03</text>
<text x="339.1" y="598.8" font-size="8" fill="#666" text-anchor="middle" dominant-baseline="central">04</text>
<text x="372.7" y="598.8" font-size="8" fill="#666" text-anchor="middle" dominant-baseline="central">05</text>
<text x="406.3" y="598.8" font-size="8" fill="#666" text-anchor="middle" dominant-baseline="central">06</text>
<text x="439.9" y="598.8" font-size="8" fill="#666" text-anchor="middle" dominant-baseline="central">07</text>
<text x="473.5" y="598.8" font-size="8" fill="#666" text-anchor="middle" dominant-baseline="central">08</text>
<line x1="238.3" y1="590.7" x2="238.3" y2="593.7" stroke="#777" stroke-width="1"/>
<line x1="271.9" y1="590.7" x2="271.9" y2="593.7" stroke="#777" stroke-width="1"/>
<line x1="305.5" y1="590.7" x2="305.5" y2="593.7" stroke="#777" stroke-width="1"/>
<line x1="339.1" y1="590.7" x2="339.1" y2="593.7" stroke="#777" stroke-width="1"/>
<line x1="372.7" y1="590.7" x2="372.7" y2="593.7" stroke="#777" stroke-width="1"/>
<line x1="406.3" y1="590.7" x2="406.3" y2="593.7" stroke="#777" stroke-width="1"/>
<line x1="439.9" y1="590.7" x2="439.9" y2="593.7" stroke="#777" stroke-width="1"/>
<line x1="473.5" y1="590.7" x2="473.5" y2="593.7" stroke="#777" stroke-width="1"/>
<line x1="299.9" y1="472.9" x2="319.3" y2="472.9" stroke="#5ee8c0" stroke-width="1.2"/><circle cx="309.6" cy="472.9" r="4.4" fill="#fff" stroke="#5ee8c0" stroke-width="1.2"/><text x="322.6" y="472.9" font-size="9" fill="#555" dominant-baseline="central">2021</text>
<line x1="350.0" y1="472.9" x2="369.4" y2="472.9" stroke="#40b8ee" stroke-width="1.2"/><circle cx="359.7" cy="472.9" r="4.4" fill="#fff" stroke="#40b8ee" stroke-width="1.2"/><text x="372.7" y="472.9" font-size="9" fill="#555" dominant-baseline="central">2020</text>
<line x1="522.2" y1="489.6" x2="522.2" y2="591.2" stroke="#777" stroke-width="1"/>
<defs><linearGradient id="g4" x1="0" y1="489.6" x2="0" y2="591.2" gradientUnits="userSpaceOnUse"><stop offset="0" stop-color="#5cb6b1"/><stop offset="0.2" stop-color="#6fb3ae"/><stop offset="0.45" stop-color="#99b7b4"/><stop offset="0.75" stop-color="#c8d0cf"/><stop offset="1" stop-color="#f4f4f4"/></linearGradient></defs>
<path d="M522.20,513.73 C522.20,513.73 543.69,560.57 569.86,565.80 C591.35,570.10 594.92,550.84 617.52,532.78 C642.58,512.74 640.27,491.92 665.18,489.60 C687.93,487.48 689.31,506.34 712.84,523.89 C736.97,541.90 760.50,560.72 760.50,560.72 L760.50,591.20 L522.20,591.20 Z" fill="url(#g4)"/>
<path d="M522.20,513.73 C522.20,513.73 543.69,560.57 569.86,565.80 C591.35,570.10 594.92,550.84 617.52,532.78 C642.58,512.74 640.27,491.92 665.18,489.60 C687.93,487.48 689.31,506.34 712.84,523.89 C736.97,541.90 760.50,560.72 760.50,560.72" fill="none" stroke="#26a07f" stroke-width="1.7"/>
<circle cx="522.20" cy="513.73" r="2.2" fill="#fff"/>
<circle cx="569.86" cy="565.80" r="2.2" fill="#fff"/>
<circle cx="617.52" cy="532.78" r="2.2" fill="#fff"/>
<circle cx="665.18" cy="489.60" r="2.2" fill="#fff"/>
<circle cx="712.84" cy="523.89" r="2.2" fill="#fff"/>
<circle cx="760.50" cy="560.72" r="2.2" fill="#fff"/>
<line x1="518.2" y1="591.2" x2="522.2" y2="591.2" stroke="#777" stroke-width="1"/>
<text x="516.2" y="591.2" font-size="8" fill="#666" text-anchor="end" dominant-baseline="central">0</text>
<line x1="518.2" y1="565.8" x2="522.2" y2="565.8" stroke="#777" stroke-width="1"/>
<text x="516.2" y="565.8" font-size="8" fill="#666" text-anchor="end" dominant-baseline="central">20</text>
<line x1="518.2" y1="540.4" x2="522.2" y2="540.4" stroke="#777" stroke-width="1"/>
<text x="516.2" y="540.4" font-size="8" fill="#666" text-anchor="end" dominant-baseline="central">40</text>
<line x1="518.2" y1="515.0" x2="522.2" y2="515.0" stroke="#777" stroke-width="1"/>
<text x="516.2" y="515.0" font-size="8" fill="#666" text-anchor="end" dominant-baseline="central">60</text>
<line x1="518.2" y1="489.6" x2="522.2" y2="489.6" stroke="#777" stroke-width="1"/>
<text x="516.2" y="489.6" font-size="8" fill="#666" text-anchor="end" dominant-baseline="central">80</text>
<line x1="522.2" y1="591.2" x2="760.5" y2="591.2" stroke="#777" stroke-width="1"/>
<clipPath id="c3"><rect x="495" y="430" width="278" height="178"/></clipPath><g clip-path="url(#c3)">
<text x="522.2" y="598.8" font-size="8" fill="#666" text-anchor="middle" dominant-baseline="central">2020-01</text>
<text x="569.9" y="598.8" font-size="8" fill="#666" text-anchor="middle" dominant-baseline="central">2020-02</text>
<text x="617.5" y="598.8" font-size="8" fill="#666" text-anchor="middle" dominant-baseline="central">2020-03</text>
<text x="665.2" y="598.8" font-size="8" fill="#666" text-anchor="middle" dominant-baseline="central">2020-04</text>
<text x="712.8" y="598.8" font-size="8" fill="#666" text-anchor="middle" dominant-baseline="central">2020-05</text>
<text x="760.5" y="598.8" font-size="8" fill="#666" text-anchor="middle" dominant-baseline="central">2020-06</text>
<line x1="522.2" y1="591.2" x2="522.2" y2="594.2" stroke="#777" stroke-width="1"/>
<line x1="569.9" y1="591.2" x2="569.9" y2="594.2" stroke="#777" stroke-width="1"/>
<line x1="617.5" y1="591.2" x2="617.5" y2="594.2" stroke="#777" stroke-width="1"/>
<line x1="665.2" y1="591.2" x2="665.2" y2="594.2" stroke="#777" stroke-width="1"/>
<line x1="712.8" y1="591.2" x2="712.8" y2="594.2" stroke="#777" stroke-width="1"/>
<line x1="760.5" y1="591.2" x2="760.5" y2="594.2" stroke="#777" stroke-width="1"/>
</g>
<line x1="614.7" y1="472.9" x2="634.1" y2="472.9" stroke="#5ee8c0" stroke-width="1.2"/><circle cx="624.4" cy="472.9" r="4.4" fill="#fff" stroke="#5ee8c0" stroke-width="1.2"/><text x="637.4" y="472.9" font-size="8.5" fill="#555" dominant-baseline="central">金额</text>
<line x1="807.8" y1="489.7" x2="807.8" y2="591.2" stroke="#777" stroke-width="1"/>
<defs><linearGradient id="b5" x1="0" y1="0" x2="0" y2="1"><stop offset="0" stop-color="#fdc80a"/><stop offset="1" stop-color="#f47f4d"/></linearGradient></defs>
<defs><linearGradient id="b6" x1="0" y1="0" x2="0" y2="1"><stop offset="0" stop-color="#82d172"/><stop offset="1" stop-color="#14bdb0"/></linearGradient></defs>
<rect x="818.15" y="501.88" width="12.40" height="89.32" fill="url(#b5)"/>
<rect x="834.75" y="505.94" width="12.40" height="85.26" fill="url(#b6)"/>
<rect x="867.85" y="505.94" width="12.40" height="85.26" fill="url(#b5)"/>
<rect x="884.45" y="510.00" width="12.40" height="81.20" fill="url(#b6)"/>
<rect x="917.55" y="497.82" width="12.40" height="93.38" fill="url(#b5)"/>
<rect x="934.15" y="514.06" width="12.40" height="77.14" fill="url(#b6)"/>
<rect x="967.25" y="510.00" width="12.40" height="81.20" fill="url(#b5)"/>
<rect x="983.85" y="510.00" width="12.40" height="81.20" fill="url(#b6)"/>
<rect x="1016.95" y="507.97" width="12.40" height="83.23" fill="url(#b5)"/>
<rect x="1033.55" y="507.97" width="12.40" height="83.23" fill="url(#b6)"/>
<line x1="803.8" y1="591.2" x2="807.8" y2="591.2" stroke="#777" stroke-width="1"/>
<text x="801.8" y="591.2" font-size="8" fill="#666" text-anchor="end" dominant-baseline="central">0</text>
<line x1="803.8" y1="570.9" x2="807.8" y2="570.9" stroke="#777" stroke-width="1"/>
<text x="801.8" y="570.9" font-size="8" fill="#666" text-anchor="end" dominant-baseline="central">50</text>
<line x1="803.8" y1="550.6" x2="807.8" y2="550.6" stroke="#777" stroke-width="1"/>
<text x="801.8" y="550.6" font-size="8" fill="#666" text-anchor="end" dominant-baseline="central">100</text>
<line x1="803.8" y1="530.3" x2="807.8" y2="530.3" stroke="#777" stroke-width="1"/>
<text x="801.8" y="530.3" font-size="8" fill="#666" text-anchor="end" dominant-baseline="central">150</text>
<line x1="803.8" y1="510.0" x2="807.8" y2="510.0" stroke="#777" stroke-width="1"/>
<text x="801.8" y="510.0" font-size="8" fill="#666" text-anchor="end" dominant-baseline="central">200</text>
<line x1="803.8" y1="489.7" x2="807.8" y2="489.7" stroke="#777" stroke-width="1"/>
<text x="801.8" y="489.7" font-size="8" fill="#666" text-anchor="end" dominant-baseline="central">250</text>
<line x1="807.8" y1="591.2" x2="1056.3" y2="591.2" stroke="#777" stroke-width="1"/>
<text x="832.6" y="599.5" font-size="8" fill="#666" text-anchor="middle" dominant-baseline="central">1月</text>
<text x="882.3" y="599.5" font-size="8" fill="#666" text-anchor="middle" dominant-baseline="central">2月</text>
<text x="932.0" y="599.5" font-size="8" fill="#666" text-anchor="middle" dominant-baseline="central">3月</text>
<text x="981.8" y="599.5" font-size="8" fill="#666" text-anchor="middle" dominant-baseline="central">4月</text>
<text x="1031.5" y="599.5" font-size="8" fill="#666" text-anchor="middle" dominant-baseline="central">5月</text>
<line x1="807.8" y1="591.2" x2="807.8" y2="594.2" stroke="#777" stroke-width="1"/>
<line x1="857.5" y1="591.2" x2="857.5" y2="594.2" stroke="#777" stroke-width="1"/>
<line x1="907.2" y1="591.2" x2="907.2" y2="594.2" stroke="#777" stroke-width="1"/>
<line x1="956.9" y1="591.2" x2="956.9" y2="594.2" stroke="#777" stroke-width="1"/>
<line x1="1006.6" y1="591.2" x2="1006.6" y2="594.2" stroke="#777" stroke-width="1"/>
<line x1="1056.3" y1="591.2" x2="1056.3" y2="594.2" stroke="#777" stroke-width="1"/>
<defs><linearGradient id="l7" x1="0" y1="0" x2="0" y2="1"><stop offset="0" stop-color="#fdc80a"/><stop offset="1" stop-color="#f47f4d"/></linearGradient></defs><rect x="868.0" y="469.2" width="7.5" height="7.5" rx="1.5" fill="url(#l7)"/><text x="878.5" y="473.0" font-size="10" fill="#555" dominant-baseline="central">应收金额</text>
<defs><linearGradient id="l8" x1="0" y1="0" x2="0" y2="1"><stop offset="0" stop-color="#82d172"/><stop offset="1" stop-color="#14bdb0"/></linearGradient></defs><rect x="925.7" y="469.2" width="7.5" height="7.5" rx="1.5" fill="url(#l8)"/><text x="936.2" y="473.0" font-size="10" fill="#555" dominant-baseline="central">实收金额</text>
<line x1="593.5" y1="319.8" x2="593.5" y2="403.8" stroke="#777" stroke-width="1"/>
<defs><linearGradient id="b9" x1="0" y1="0" x2="0" y2="1"><stop offset="0" stop-color="#13a596"/><stop offset="1" stop-color="#1c8273"/></linearGradient></defs>
<defs><linearGradient id="b10" x1="0" y1="0" x2="0" y2="1"><stop offset="0" stop-color="#82d172"/><stop offset="1" stop-color="#14bdb0"/></linearGradient></defs>
<rect x="610.54" y="331.56" width="9.60" height="72.24" fill="url(#b9)"/>
<rect x="623.04" y="332.68" width="9.60" height="71.12" fill="url(#b10)"/>
<rect x="666.73" y="340.24" width="9.60" height="63.56" fill="url(#b9)"/>
<rect x="679.23" y="338.70" width="9.60" height="65.10" fill="url(#b10)"/>
<rect x="722.92" y="337.58" width="9.60" height="66.22" fill="url(#b9)"/>
<rect x="735.42" y="336.04" width="9.60" height="67.76" fill="url(#b10)"/>
<rect x="779.11" y="334.64" width="9.60" height="69.16" fill="url(#b9)"/>
<rect x="791.61" y="335.06" width="9.60" height="68.74" fill="url(#b10)"/>
<rect x="835.29" y="338.28" width="9.60" height="65.52" fill="url(#b9)"/>
<rect x="847.79" y="339.40" width="9.60" height="64.40" fill="url(#b10)"/>
<rect x="891.48" y="335.34" width="9.60" height="68.46" fill="url(#b9)"/>
<rect x="903.98" y="333.80" width="9.60" height="70.00" fill="url(#b10)"/>
<rect x="947.67" y="336.46" width="9.60" height="67.34" fill="url(#b9)"/>
<rect x="960.17" y="338.70" width="9.60" height="65.10" fill="url(#b10)"/>
<rect x="1003.86" y="339.40" width="9.60" height="64.40" fill="url(#b9)"/>
<rect x="1016.36" y="338.00" width="9.60" height="65.80" fill="url(#b10)"/>
<line x1="589.5" y1="403.8" x2="593.5" y2="403.8" stroke="#777" stroke-width="1"/>
<text x="587.5" y="403.8" font-size="8" fill="#666" text-anchor="end" dominant-baseline="central">0</text>
<line x1="589.5" y1="389.8" x2="593.5" y2="389.8" stroke="#777" stroke-width="1"/>
<text x="587.5" y="389.8" font-size="8" fill="#666" text-anchor="end" dominant-baseline="central">100</text>
<line x1="589.5" y1="375.8" x2="593.5" y2="375.8" stroke="#777" stroke-width="1"/>
<text x="587.5" y="375.8" font-size="8" fill="#666" text-anchor="end" dominant-baseline="central">200</text>
<line x1="589.5" y1="361.8" x2="593.5" y2="361.8" stroke="#777" stroke-width="1"/>
<text x="587.5" y="361.8" font-size="8" fill="#666" text-anchor="end" dominant-baseline="central">300</text>
<line x1="589.5" y1="347.8" x2="593.5" y2="347.8" stroke="#777" stroke-width="1"/>
<text x="587.5" y="347.8" font-size="8" fill="#666" text-anchor="end" dominant-baseline="central">400</text>
<line x1="589.5" y1="333.8" x2="593.5" y2="333.8" stroke="#777" stroke-width="1"/>
<text x="587.5" y="333.8" font-size="8" fill="#666" text-anchor="end" dominant-baseline="central">500</text>
<line x1="589.5" y1="319.8" x2="593.5" y2="319.8" stroke="#777" stroke-width="1"/>
<text x="587.5" y="319.8" font-size="8" fill="#666" text-anchor="end" dominant-baseline="central">600</text>
<line x1="593.5" y1="403.8" x2="1043.0" y2="403.8" stroke="#777" stroke-width="1"/>
<text x="621.6" y="411.6" font-size="8" fill="#666" text-anchor="middle" dominant-baseline="central">1月</text>
<text x="677.8" y="411.6" font-size="8" fill="#666" text-anchor="middle" dominant-baseline="central">2月</text>
<text x="734.0" y="411.6" font-size="8" fill="#666" text-anchor="middle" dominant-baseline="central">3月</text>
<text x="790.2" y="411.6" font-size="8" fill="#666" text-anchor="middle" dominant-baseline="central">4月</text>
<text x="846.3" y="411.6" font-size="8" fill="#666" text-anchor="middle" dominant-baseline="central">5月</text>
<text x="902.5" y="411.6" font-size="8" fill="#666" text-anchor="middle" dominant-baseline="central">6月</text>
<text x="958.7" y="411.6" font-size="8" fill="#666" text-anchor="middle" dominant-baseline="central">7月</text>
<text x="1014.9" y="411.6" font-size="8" fill="#666" text-anchor="middle" dominant-baseline="central">8月</text>
<line x1="593.5" y1="403.8" x2="593.5" y2="406.8" stroke="#777" stroke-width="1"/>
<line x1="649.7" y1="403.8" x2="649.7" y2="406.8" stroke="#777" stroke-width="1"/>
<line x1="705.9" y1="403.8" x2="705.9" y2="406.8" stroke="#777" stroke-width="1"/>
<line x1="762.1" y1="403.8" x2="762.1" y2="406.8" stroke="#777" stroke-width="1"/>
<line x1="818.2" y1="403.8" x2="818.2" y2="406.8" stroke="#777" stroke-width="1"/>
<line x1="874.4" y1="403.8" x2="874.4" y2="406.8" stroke="#777" stroke-width="1"/>
<line x1="930.6" y1="403.8" x2="930.6" y2="406.8" stroke="#777" stroke-width="1"/>
<line x1="986.8" y1="403.8" x2="986.8" y2="406.8" stroke="#777" stroke-width="1"/>
<line x1="1043.0" y1="403.8" x2="1043.0" y2="406.8" stroke="#777" stroke-width="1"/>
<defs><linearGradient id="l11" x1="0" y1="0" x2="0" y2="1"><stop offset="0" stop-color="#13a596"/><stop offset="1" stop-color="#1c8273"/></linearGradient></defs><rect x="761.0" y="317.8" width="7.5" height="7.5" rx="1.5" fill="url(#l11)"/><text x="771.5" y="321.5" font-size="10" fill="#555" dominant-baseline="central">应收金额</text>
<defs><linearGradient id="l12" x1="0" y1="0" x2="0" y2="1"><stop offset="0" stop-color="#82d172"/><stop offset="1" stop-color="#14bdb0"/></linearGradient></defs><rect x="819.0" y="317.8" width="7.5" height="7.5" rx="1.5" fill="url(#l12)"/><text x="829.5" y="321.5" font-size="10" fill="#555" dominant-baseline="central">实收金额</text>
</svg>
</body></html>
